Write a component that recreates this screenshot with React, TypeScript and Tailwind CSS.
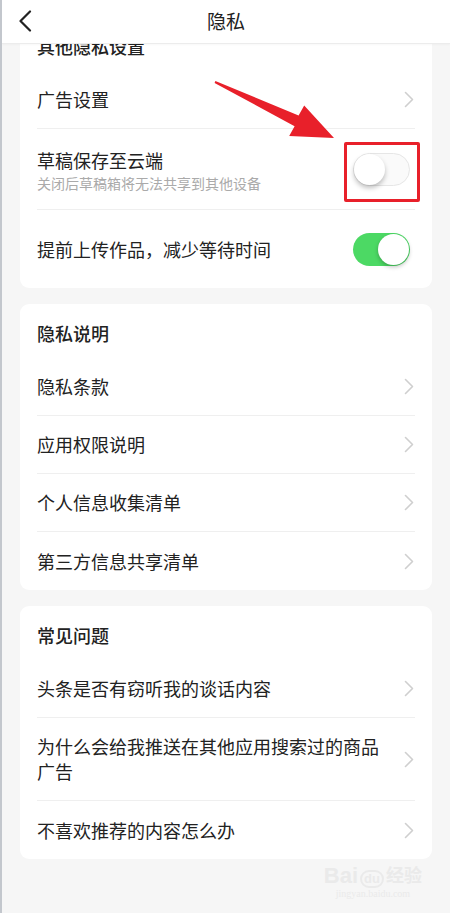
import React from "react";

const FONT = { fontFamily: '"Noto Sans CJK SC", "Noto Sans", sans-serif' };

function Chevron() {
  return (
    <svg width="10" height="17" viewBox="0 0 10 17" className="shrink-0">
      <path d="M1.5 1.5 L8.5 8.5 L1.5 15.5" fill="none" stroke="#cfcfcf" strokeWidth="1.6" strokeLinecap="round" strokeLinejoin="round" />
    </svg>
  );
}

function Toggle({ on }: { on: boolean }) {
  if (on) {
    return (
      <div className="relative w-[57px] h-[33px] rounded-full bg-[#4cd964] shrink-0">
        <div className="absolute right-[1px] top-[1px] w-[31px] h-[31px] rounded-full bg-white shadow-[0_2px_4px_rgba(0,0,0,0.25)]" />
      </div>
    );
  }
  return (
    <div className="relative w-[57px] h-[33px] rounded-full bg-[#fafafa] border border-[#e6e6e6] shrink-0">
      <div className="absolute left-[0px] top-[0px] w-[31px] h-[31px] rounded-full bg-white shadow-[0_3px_5px_rgba(0,0,0,0.25)]" />
    </div>
  );
}

function SectionHeader({ title }: { title: string }) {
  return (
    <div className="h-[54px] flex items-center pt-[4px] text-[18px] font-medium text-[#222]">{title}</div>
  );
}

function Row({ label, h = "h-[58px]", last = false }: { label: string; h?: string; last?: boolean }) {
  return (
    <div className={`${h} flex items-center justify-between ${last ? "" : "border-b border-[#efefef]"}`}>
      <div className="text-[18px] leading-[25px] text-[#222] max-w-[355px]">{label}</div>
      <div className="pr-[1px]">
        <Chevron />
      </div>
    </div>
  );
}

export default function App() {
  return (
    <div className="relative w-[450px] h-[920px] overflow-hidden bg-white" style={FONT}>
      <div className="flex h-[913px]">
        <div className="w-[2px] bg-[#c3c7cd] shrink-0" />
        <div className="relative flex-1 bg-[#f6f6f6] overflow-hidden">
          {/* header */}
          <div className="absolute left-0 right-0 top-0 h-[44px] bg-white z-10 border-b border-[#ececec] shadow-[0_1px_2px_rgba(0,0,0,0.03)] flex items-center justify-center">
            <div className="absolute left-[16px] top-[10px]">
              <svg width="14" height="22" viewBox="0 0 14 22">
                <path d="M12 1.5 L2.5 11 L12 20.5" fill="none" stroke="#222" strokeWidth="2.2" strokeLinecap="round" strokeLinejoin="round" />
              </svg>
            </div>
            <div className="text-[19px] text-[#222]">隐私</div>
          </div>

          <div className="pt-[17px] px-[18px] flex flex-col gap-[16px]">
            {/* card 1 */}
            <div className="bg-white rounded-[9px] px-[17px]">
              <SectionHeader title="其他隐私设置" />
              <Row label="广告设置" />
              <div className="h-[81px] flex items-center justify-between border-b border-[#efefef]">
                <div className="flex flex-col pt-[3px]">
                  <div className="text-[18px] leading-[24px] text-[#222]">草稿保存至云端</div>
                  <div className="text-[14px] leading-[20px] text-[#aaaaaa] mt-[1px]">关闭后草稿箱将无法共享到其他设备</div>
                </div>
                <div className="mr-[5px]">
                  <Toggle on={false} />
                </div>
              </div>
              <div className="h-[78px] flex items-center justify-between">
                <div className="text-[18px] text-[#222]">提前上传作品，减少等待时间</div>
                <div className="mr-[5px]">
                  <Toggle on={true} />
                </div>
              </div>
            </div>

            {/* card 2 */}
            <div className="bg-white rounded-[9px] px-[17px]">
              <SectionHeader title="隐私说明" />
              <Row label="隐私条款" />
              <Row label="应用权限说明" />
              <Row label="个人信息收集清单" />
              <Row label="第三方信息共享清单" last />
            </div>

            {/* card 3 */}
            <div className="bg-white rounded-[9px] px-[17px]">
              <SectionHeader title="常见问题" />
              <Row label="头条是否有窃听我的谈话内容" />
              <Row label="为什么会给我推送在其他应用搜索过的商品广告" h="h-[83px]" />
              <Row label="不喜欢推荐的内容怎么办" last />
            </div>
          </div>

          {/* watermark */}
          <div className="absolute right-[28px] top-[864px] flex flex-col items-center text-[#eaeaea]">
            <div className="flex items-end gap-[2px] text-[22px] font-bold leading-[24px]" style={{ fontFamily: '"Liberation Sans", "Noto Sans CJK SC", sans-serif' }}>
              <span>Bai</span>
              <span className="text-[13px] border-2 border-[#eaeaea] rounded-full px-[2px] leading-[14px]">du</span>
              <span className="text-[18px]">经验</span>
            </div>
            <div className="text-[10px] leading-[12px]" style={{ fontFamily: '"Liberation Serif", serif' }}>jingyan.baidu.com</div>
          </div>
        </div>
      </div>
      <div className="h-[7px] bg-white" />

      {/* red highlight box */}
      <div className="absolute left-[344px] top-[142px] w-[76px] h-[60px] border-[3px] border-[#e8202a] rounded-[2px] z-20" />

      {/* red arrow */}
      <svg className="absolute left-0 top-0 z-20 pointer-events-none" width="450" height="200" viewBox="0 0 450 200">
        <polygon
          points="214.6,82.9 215.4,81.1 298.6,115.4 304.2,105.4 334,138 289.2,136.0 294.6,126.2"
          fill="#e8202a"
        />
      </svg>
    </div>
  );
}
